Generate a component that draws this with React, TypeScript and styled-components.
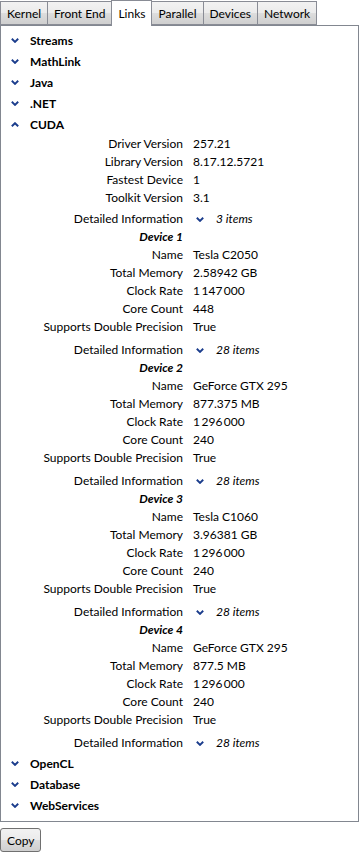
import styled, { createGlobalStyle } from "styled-components";

const GlobalStyle = createGlobalStyle`
    body {
        margin: 0;
        background: #ffffff;
        font-family: Lato, "Liberation Sans", sans-serif;
        font-size: 12px;
        color: #000;
    }
`;

interface Device {
    name: string
    memory: string
    clock: string
    cores: string
    items: string
}

const devices: Device[] = [
    { name: "Tesla C2050", memory: "2.58942 GB", clock: "1\u2009147\u2009000", cores: "448", items: "28 items" },
    { name: "GeForce GTX 295", memory: "877.375 MB", clock: "1\u2009296\u2009000", cores: "240", items: "28 items" },
    { name: "Tesla C1060", memory: "3.96381 GB", clock: "1\u2009296\u2009000", cores: "240", items: "28 items" },
    { name: "GeForce GTX 295", memory: "877.5 MB", clock: "1\u2009296\u2009000", cores: "240", items: "28 items" },
];

const tabs = ["Kernel", "Front End", "Links", "Parallel", "Devices", "Network"];

function Chevron({ up }: { up?: boolean }) {
    return (
        <svg width="8" height="5" viewBox="0 0 8 5">
            <path
                d={up ? "M0.8 4.3 L4 1.2 L7.2 4.3" : "M0.8 0.8 L4 3.9 L7.2 0.8"}
                fill="none"
                stroke="#1a3c8c"
                strokeWidth="1.9"
            />
        </svg>
    );
}

function Section({ title, open }: { title: string, open?: boolean }) {
    return (
        <SectionHead>
            <Toggle><Chevron up={open} /></Toggle>
            {title}
        </SectionHead>
    );
}

function Detail({ items, top, bottom }: { items: string, top: number, bottom: number }) {
    return (
        <>
            <Label $top={top} $bottom={bottom}>Detailed Information</Label>
            <Value $top={top} $bottom={bottom}>
                <Toggle $small><Chevron /></Toggle>
                <Items>{items}</Items>
            </Value>
        </>
    );
}

export default function App() {
    return (
        <Page>
            <GlobalStyle />
            <TabBar>
                {tabs.map(t => (
                    <Tab key={t} $active={t === "Links"}>{t}</Tab>
                ))}
            </TabBar>
            <Panel>
                <Section title="Streams" />
                <Section title="MathLink" />
                <Section title="Java" />
                <Section title=".NET" />
                <Section title="CUDA" open />
                <Props>
                    <Label>Driver Version</Label><Value>257.21</Value>
                    <Label>Library Version</Label><Value>8.17.12.5721</Value>
                    <Label>Fastest Device</Label><Value>1</Value>
                    <Label>Toolkit Version</Label><Value>3.1</Value>
                    <Detail items="3 items" top={3} bottom={0} />
                    {devices.map((d, i) => (
                        <DeviceBlock key={i}>
                            <DeviceTitle>Device {i + 1}</DeviceTitle><span />
                            <Label>Name</Label><Value>{d.name}</Value>
                            <Label>Total Memory</Label><Value>{d.memory}</Value>
                            <Label>Clock Rate</Label><Value>{d.clock}</Value>
                            <Label>Core Count</Label><Value>{d.cores}</Value>
                            <Label>Supports Double Precision</Label><Value>True</Value>
                            <Detail items={d.items} top={5} bottom={0} />
                        </DeviceBlock>
                    ))}
                </Props>
                <Section title="OpenCL" />
                <Section title="Database" />
                <Section title="WebServices" />
            </Panel>
            <CopyButton>Copy</CopyButton>
        </Page>
    );
}

const Page = styled.div`
    width: 359px;
    display: flex;
    flex-direction: column;
    align-items: flex-start;
`;

const TabBar = styled.div`
    display: flex;
    align-items: flex-end;
    height: 25px;
    position: relative;
    z-index: 1;
`;

const Tab = styled.div<{ $active?: boolean }>`
    box-sizing: border-box;
    height: ${p => p.$active ? "26px" : "24px"};
    padding: 0 6px;
    margin-bottom: ${p => p.$active ? "-1px" : "0"};
    display: flex;
    align-items: center;
    padding-top: ${p => p.$active ? "0" : "1px"};
    border: 1px solid #898c95;
    border-bottom: ${p => p.$active ? "none" : "1px solid #898c95"};
    margin-right: -1px;
    background: ${p => p.$active ? "#ffffff" : "linear-gradient(#f2f2f2, #ebebeb 50%, #dddddd 51%, #cfcfcf)"};
    font-size: 12px;
    white-space: nowrap;
`;

const Panel = styled.div`
    box-sizing: border-box;
    width: 359px;
    border: 1px solid #828790;
    padding: 4px 0 5px 0;
    display: flex;
    flex-direction: column;
`;

const SectionHead = styled.div`
    display: flex;
    align-items: center;
    height: 21px;
    font-weight: bold;
    font-size: 12px;
`;

const Toggle = styled.span<{ $small?: boolean }>`
    display: inline-flex;
    align-items: center;
    justify-content: center;
    width: ${p => p.$small ? "14px" : "17px"};
    margin-left: ${p => p.$small ? "0" : "5px"};
    margin-right: ${p => p.$small ? "9px" : "7px"};
`;

const Props = styled.div`
    display: grid;
    grid-template-columns: 192px 1fr;
    padding-bottom: 1px;
`;

const DeviceBlock = styled.div`
    display: contents;
`;

const Label = styled.div<{ $top?: number, $bottom?: number }>`
    text-align: right;
    padding-right: 10px;
    line-height: 18px;
    margin: ${p => `${p.$top ?? 0}px 0 ${p.$bottom ?? 0}px`};
    white-space: nowrap;
`;

const Value = styled.div<{ $top?: number, $bottom?: number }>`
    line-height: 18px;
    display: flex;
    align-items: center;
    margin: ${p => `${p.$top ?? 0}px 0 ${p.$bottom ?? 0}px`};
    white-space: nowrap;
`;

const Items = styled.span`
    font-style: italic;
`;

const DeviceTitle = styled.div`
    text-align: right;
    padding-right: 10px;
    line-height: 18px;
    font-weight: bold;
    font-style: italic;
`;

const CopyButton = styled.button`
    margin-top: 6px;
    height: 24px;
    padding: 0 6px;
    font-family: Lato, "Liberation Sans", sans-serif;
    font-size: 12px;
    color: #000;
    border: 1px solid #707070;
    border-radius: 3px;
    background: linear-gradient(#f2f2f2, #ebebeb 50%, #dddddd 51%, #cfcfcf);
`;
